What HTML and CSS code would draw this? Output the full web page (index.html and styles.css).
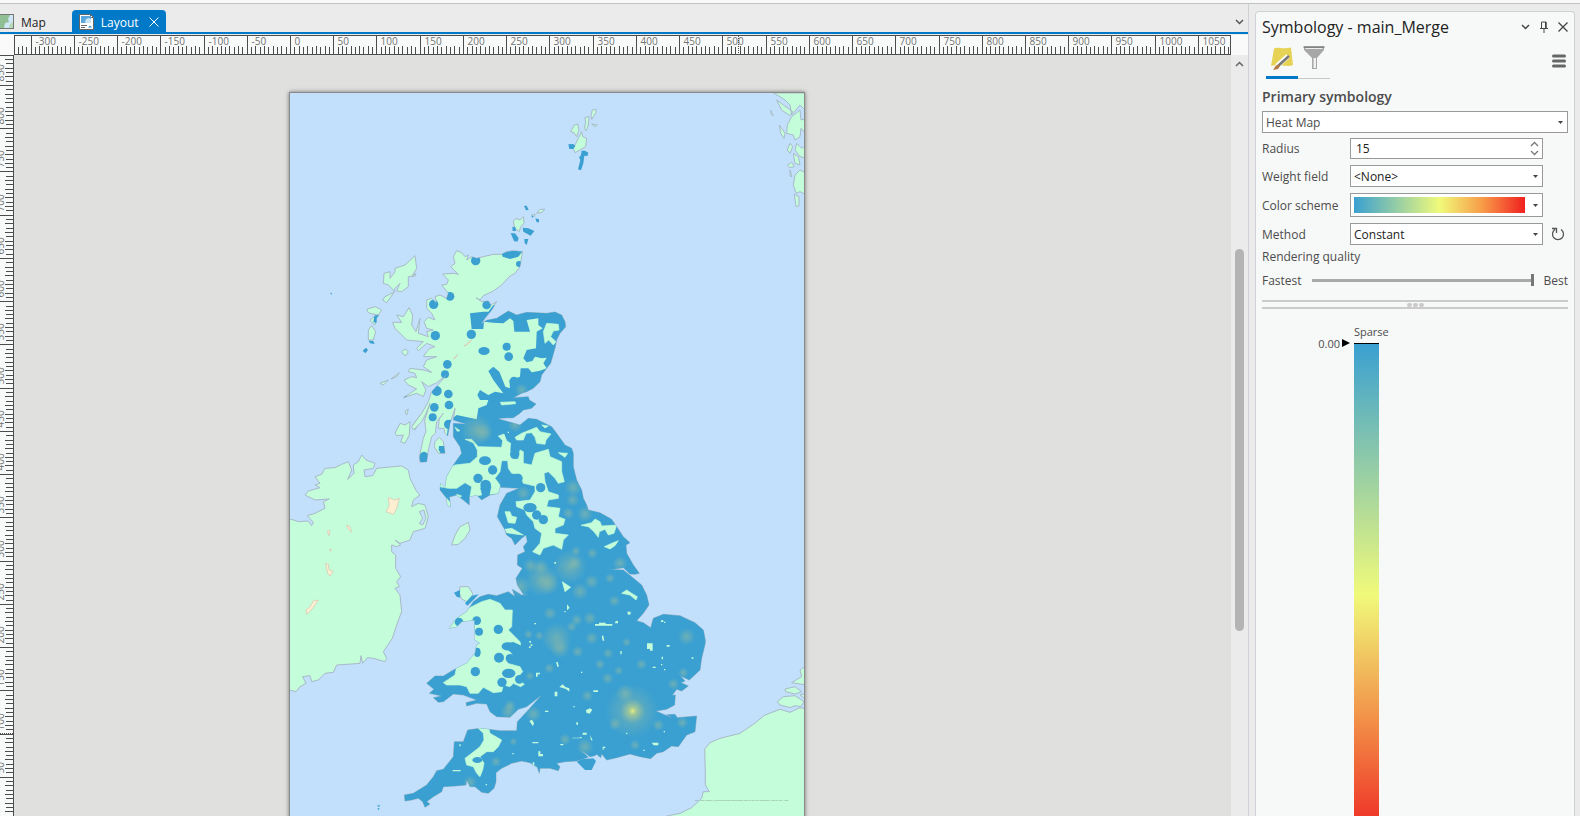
FILE: index.html
```html
<!DOCTYPE html>
<html lang="en">
<head>
    <meta charset="UTF-8">
    <meta name="viewport" content="width=device-width, initial-scale=1.0">
    <title>Layout - Symbology</title>
    <link rel="stylesheet" href="styles.css">
</head>
<body>
    <div class="ribbon-edge"></div>

    <div class="workspace">
        <!-- Layout view -->
        <main class="view">
            <div class="view-tabs">
                <button class="view-tab" type="button">
                    <svg width="16" height="16" viewBox="0 0 16 16">
                        <rect x="0.5" y="0.5" width="14" height="14" fill="#cfe6f5" stroke="#777"/>
                        <path d="M1 1h10l-2 4 1 3-4 1-1 5H1z" fill="#8fbf93"/>
                        <path d="M10 14l1-4 3-2v6z" fill="#b5d9b5"/>
                    </svg>
                    Map
                </button>
                <button class="view-tab active" type="button">
                    <svg width="16" height="16" viewBox="0 0 16 16">
                        <path d="M0.5 0.5h11l3 3v12h-14z" fill="#fff" stroke="#666"/>
                        <path d="M11.500 0.500v3h3z" fill="#fff" stroke="#666"/>
                        <rect x="2" y="2" width="10" height="7" fill="#5ba7dc"/>
                        <path d="M6 8l1-3 3-1 2 1v4H7z" fill="#c9e4f5"/>
                        <path d="M2 11.500h6M2 13.500h4" stroke="#666"/>
                        <path d="M9 13.500l2-2 2 2z" fill="#2d8bd0"/>
                    </svg>
                    Layout
                    <svg class="tab-close" width="10" height="10" viewBox="0 0 10 10"><path d="M0.500 0.500l9 9M9.500 0.500l-9 9" stroke="#fff" fill="none"/></svg>
                </button>
                <button class="icon-button tab-list" type="button" aria-label="Open views">
                    <svg width="9" height="6" viewBox="0 0 9 6"><path d="M1 1l3.500 3.500L8 1" fill="none" stroke="#555" stroke-width="1.500"/></svg>
                </button>
            </div>

            <div class="view-body">
                <div class="corner"></div>
                <svg class="ruler ruler-x" id="ruler-x"></svg>
                <div class="corner"></div>
                <svg class="ruler ruler-y" id="ruler-y"></svg>

                <div class="canvas">
                    <div class="sheet">
                        <svg class="map" viewBox="30 24 1542 2523" role="img" aria-label="Heat map of Great Britain">
                            <defs>
                                <path id="gb" d="M530 497L545 503 555 515 565 510 560 525 575 515 590 520 610 515 640 508 665 508 680 500 700 497 728 500 725 515 720 545 705 565 690 573 665 600 640 618 610 632 600 645 588 638 605 650 625 648 633 660 650 650 635 675 615 700 603 717 620 706 650 700 685 678 710 690 740 682 800 685 825 681 845 690 855 710 857 725 840 745 830 765 825 790 812 835 800 850 785 870 780 890 760 910 740 920 725 925 700 938 745 935 748 945 768 957 755 970 730 975 720 985 700 998 655 1000 640 987 660 1003 720 1020 745 1000 770 1003 815 1025 830 1045 855 1080 875 1090 880 1105 880 1145 890 1185 905 1215 910 1240 920 1260 925 1275 960 1283 995 1303 1010 1325 1030 1355 1050 1373 1038 1380 1040 1405 1060 1440 1078 1465 1065 1468 1050 1467 1030 1448 1000 1453 980 1453 1030 1455 1055 1475 1085 1500 1100 1530 1107 1560 1090 1585 1070 1607 1090 1613 1112 1628 1120 1600 1150 1588 1200 1592 1245 1613 1270 1635 1277 1670 1265 1720 1260 1755 1228 1785 1202 1773 1215 1788 1203 1793 1225 1803 1205 1818 1190 1813 1175 1833 1160 1832 1186 1830 1184 1860 1160 1873 1128 1878 1148 1887 1180 1900 1160 1889 1185 1888 1192 1898 1250 1893 1245 1940 1220 1950 1195 1985 1175 1983 1150 2000 1130 2005 1112 2021 1080 2015 1050 2007 1010 2018 980 2025 965 2007 962 2018 950 2008 945 2012 930 2015 900 1993 925 2017 890 2028 855 2030 830 2035 840 2045 835 2057 810 2050 780 2050 778 2065 772 2047 750 2033 725 2028 695 2035 665 2050 648 2063 648 2090 642 2110 625 2125 605 2122 585 2105 570 2105 560 2085 558 2100 525 2103 490 2105 485 2120 460 2135 440 2150 450 2157 435 2167 428 2150 415 2140 395 2145 375 2148 373 2130 400 2125 440 2100 460 2075 470 2057 490 2053 520 2015 523 1970 550 1970 563 1935 600 1930 660 1937 710 1937 712 1910 745 1875 785 1830 740 1865 715 1873 690 1897 650 1895 630 1880 620 1857 590 1855 560 1863 558 1853 590 1845 550 1830 520 1827 490 1850 475 1852 460 1838 485 1833 448 1825 462 1813 440 1795 465 1773 490 1773 520 1755 560 1735 585 1705 590 1680 600 1675 585 1665 585 1645 583 1605 545 1610 530 1625 508 1630 530 1600 560 1580 580 1550 600 1535 625 1528 650 1532 685 1520 705 1535 697 1513 725 1530 745 1528 730 1528 712 1500 708 1480 727 1450 712 1440 713 1410 735 1400 730 1385 742 1370 738 1350 725 1360 705 1380 695 1360 680 1350 675 1335 652 1295 660 1260 680 1225 717 1210 660 1207 655 1225 630 1230 605 1245 590 1230 568 1235 568 1260 550 1245 530 1230 508 1236 512 1265 502 1260 500 1240 480 1215 482 1195 495 1210 500 1175 520 1140 545 1105 540 1085 520 1055 520 1015 560 1018 520 1005 525 970 510 1015 503 1053 495 1045 492 1030 475 1030 478 1000 490 985 470 1010 466 1045 455 1055 445 1095 440 1130 420 1132 418 1115 430 1060 438 1040 434 1005 450 955 438 985 425 1010 400 1035 395 1025 425 985 445 950 455 920 500 870 470 893 445 905 425 890 438 915 430 935 410 925 370 938 390 925 410 912 385 900 372 885 395 875 410 878 405 865 385 860 390 850 430 855 455 862 430 845 440 825 470 815 430 815 440 800 450 790 465 785 440 775 415 797 410 790 430 770 380 765 345 730 338 712 365 712 350 690 370 695 387 668 398 690 395 720 408 740 420 700 415 745 445 755 440 740 460 735 440 730 432 710 445 697 465 705 455 685 440 670 440 645 455 640 470 655 465 635 480 630 500 640 505 625 485 600 500 598 505 585 488 567 520 565 535 568 512 545 525 535 520 515Z"/>
                                <clipPath id="gb-clip"><use href="#gb"/></clipPath>
                                <radialGradient id="warm">
                                    <stop offset="0" stop-color="#a0c09c" stop-opacity="0.5"/>
                                    <stop offset="1" stop-color="#a0c09c" stop-opacity="0"/>
                                </radialGradient>
                                <radialGradient id="hot">
                                    <stop offset="0" stop-color="#e6ec80"/>
                                    <stop offset="0.300" stop-color="#b9d28a" stop-opacity="0.700"/>
                                    <stop offset="1" stop-color="#9dbf9f" stop-opacity="0"/>
                                </radialGradient>
                            </defs>

                            <rect x="0" y="0" width="1600" height="2600" fill="#c2dffc"/>

                            <!-- Other land -->
                            <g class="land">
                                <path d="M20 1307L35 1303 55 1310 85 1308 95 1322 100 1312 82 1292 105 1285 135 1270 130 1250 148 1242 105 1245 75 1230 85 1218 120 1208 105 1200 120 1195 105 1175 125 1168 135 1150 165 1148 185 1138 205 1130 215 1155 203 1183 222 1165 220 1140 235 1130 245 1110 258 1125 285 1135 280 1150 252 1155 255 1175 278 1172 290 1150 340 1145 365 1143 385 1155 390 1180 410 1220 420 1230 400 1245 395 1265 415 1255 435 1260 445 1295 435 1330 400 1340 390 1365 360 1375 345 1365 362 1380 350 1385 335 1380 335 1400 347 1410 347 1450 362 1475 350 1490 358 1505 345 1510 360 1530 365 1580 350 1620 337 1660 320 1685 310 1700 320 1720 315 1730 280 1720 262 1718 248 1735 243 1712 240 1735 215 1737 170 1740 160 1762 135 1765 115 1785 95 1790 90 1772 68 1775 78 1795 60 1805 48 1820 20 1813Z"/>
                                <path d="M418 1280L432 1275 438 1300 428 1320 418 1315 428 1300Z" fill="#c2dffc"/>
                                <path d="M515 1380L525 1350 540 1325 565 1312 570 1335 555 1360 535 1378Z"/>
                                <path d="M405 512L410 550 395 575 408 565 405 573 385 575 385 605 365 620 350 618 360 595 345 610 340 625 320 653 308 645 315 635 345 620 325 600 310 595 312 565 330 560 330 580 345 560 345 550 375 540Z"/>
                                <path d="M262 672L285 665 305 675 295 690 270 685 262 680ZM270 705L290 690 285 720 275 712ZM265 735L275 722 287 740 280 765 265 765Z"/>
                                <path d="M365 800L375 792 385 800 378 812 370 808ZM300 895L325 885 310 900ZM333 882L358 863 350 875ZM375 980L385 972 380 990Z"/>
                                <path d="M345 1045L360 1015 375 1020 390 1010 388 1050 375 1075 362 1070 370 1050 350 1052ZM398 1020L425 985 435 972 425 1000 405 1035Z"/>
                                <path d="M465 1070L478 1057 490 1070 495 1105 475 1105 463 1085Z"/>
                                <path d="M540 1505L565 1505 578 1525 575 1542 560 1550 545 1542 538 1525Z"/>
                                <path d="M700 410L708 400 720 405 730 395 732 415 722 425 718 440 705 430ZM770 385L780 373 795 373 785 382ZM755 390L765 388 762 396Z"/>
                                <!-- Shetland -->
                                <path d="M937 75L948 73 948 83 940 95 935 103 933 90ZM915 97L927 95 925 120 918 137 913 130 917 115ZM935 117L952 120 945 125ZM872 140L883 120 893 117 897 135 890 155 882 143ZM895 160L905 140 908 155 920 160 917 185 900 195 885 203 880 190Z"/>
                                <!-- Norway -->
                                <path d="M1480 24L1580 24 1580 80 1560 60 1535 90 1530 60 1515 45 1500 35ZM1535 95L1560 75 1563 105 1580 100 1580 150 1563 130 1560 155 1545 165 1540 150 1520 145 1522 120ZM1490 45L1510 60 1538 80 1530 92 1505 75ZM1472 76L1480 92 1474 88ZM1498 120L1515 145 1512 160 1502 145ZM1530 175L1538 185 1530 205 1522 195ZM1580 180L1565 190 1550 175 1545 195 1560 215 1580 220ZM1540 205L1555 215 1560 240 1545 235ZM1522 240L1535 232 1543 245 1530 248ZM1560 255L1580 265 1580 330 1560 320 1548 325 1540 300 1545 270ZM1530 255L1536 275 1530 273ZM1543 328L1557 335 1557 362 1548 365Z"/>
                                <!-- Continent -->
                                <path d="M1580 1740L1560 1755 1565 1775 1535 1793 1580 1800ZM1515 1812L1545 1805 1565 1820 1545 1827 1517 1820ZM1580 1825L1560 1830 1580 1845ZM1492 1850L1510 1835 1545 1832 1572 1850 1562 1865 1545 1862 1530 1868 1500 1860Z"/>
                                <path d="M1580 1872L1560 1868 1530 1882 1500 1873 1455 1890 1420 1918 1380 1945 1320 1960 1290 1973 1274 1992 1276 2060 1276 2100 1288 2120 1270 2120 1265 2140 1235 2168 1200 2185 1160 2193 1130 2250 1580 2250Z"/>
                                <use href="#gb"/>
                            </g>

                            <!-- Lakes -->
                            <g fill="#fdf0d2" stroke="#d9bfae" stroke-width="2">
                                <path d="M325 1238L345 1245 358 1240 350 1270 340 1288 318 1280 328 1262Z"/>
                                <path d="M137 1435L145 1438 147 1455 160 1458 150 1473 143 1465ZM115 1545L100 1548 90 1565 78 1575 80 1588 98 1570ZM200 1320L210 1325 215 1342 205 1332ZM142 1338L150 1337 147 1352ZM148 1393L154 1393 152 1399Z"/>
                                <path d="M552 783L575 765 560 780ZM520 822L533 808 525 820Z"/>
                            </g>

                            <!-- Heat surface -->
                            <g clip-path="url(#gb-clip)">
                                <path class="surface" d="M570 685L610 680 625 680 640 660 700 660 870 660 900 900 1320 1400 1320 2200 340 2200 400 1400 470 1200 515 1130 500 1060 505 1010 530 990 590 1003 595 970 620 960 625 945 600 945 592 930 600 915 625 930 645 920 670 925 655 905 640 885 625 858 640 845 658 860 676 905 690 910 688 885 720 875 722 850 745 850 755 862 780 857 800 850 790 835 800 818 785 820 765 815 757 828 740 832 730 820 740 795 768 790 770 740 788 730 775 720 775 700 740 705 750 740 703 740 700 708 690 700 670 715 640 713 612 710 610 732 575 732Z"/>
                                <g class="spots">
                                    <circle cx="587" cy="527" r="14"/><circle cx="717" cy="537" r="9"/>
                                    <circle cx="510" cy="634" r="13"/><circle cx="461" cy="658" r="14"/>
                                    <circle cx="620" cy="638" r="9"/><circle cx="620" cy="660" r="13"/>
                                    <circle cx="466" cy="752" r="14"/><circle cx="574" cy="748" r="14"/>
                                    <ellipse cx="612" cy="798" rx="17" ry="12"/><circle cx="680" cy="785" r="12"/>
                                    <circle cx="686" cy="815" r="13"/><circle cx="502" cy="838" r="13"/>
                                    <circle cx="495" cy="868" r="12"/><circle cx="470" cy="918" r="15"/>
                                    <circle cx="505" cy="927" r="13"/><circle cx="463" cy="967" r="13"/>
                                    <circle cx="507" cy="960" r="13"/><circle cx="702" cy="888" r="13"/>
                                    <circle cx="458" cy="997" r="12"/><circle cx="506" cy="1018" r="14"/>
                                    <ellipse cx="432" cy="1118" rx="14" ry="18"/><circle cx="374" cy="936" r="6"/>
                                    <path d="M664 503L735 490 715 515 690 522 668 515Z"/>
                                </g>
                                <g class="gaps">
                                    <path d="M800 715L835 718 837 735 820 738 812 755 828 770 820 780 806 765 795 775 790 740ZM661 952L705 950 707 956 665 960Z"/>
                                    <g transform="translate(480 945)">
                                        <path d="M75 118L95 118 115 140 185 142 188 122 175 108 192 102 200 122 212 130 210 150 215 175 235 178 240 150 250 155 250 190 275 195 285 160 325 148 330 170 365 185 365 215 373 245 355 250 345 235 325 215 312 220 315 245 325 275 355 285 355 295 325 300 320 320 360 325 355 350 375 358 370 375 345 385 345 400 385 405 370 420 365 448 340 435 310 445 300 465 278 455 300 430 305 400 285 385 280 365 260 345 255 330 230 320 228 305 270 300 285 275 285 258 250 250 240 222 215 220 205 205 203 182 185 182 180 215 165 235 180 255 178 280 150 283 155 260 130 242 120 265 125 285 90 290 95 260 75 248 50 265 25 265 0 260 0 220 45 195 90 190 112 170 112 150 100 128Z"/>
                                        <path d="M225 112L245 100 275 88 290 82 300 95 333 102 318 120 315 133 290 130 285 112 275 98 258 100 250 120 230 120ZM355 158L383 160 375 172ZM195 335L210 335 215 348 230 352 225 370 205 368ZM195 388L215 385 250 405 225 402 200 398ZM423 376L455 368 465 357 480 365 485 378 530 375 522 400 505 405 495 388 478 395 475 412 462 395 445 380ZM493 440L515 430 535 422 525 437 510 447ZM367 545L392 562 375 575ZM545 580L560 570 575 580 592 590 588 600 570 585ZM305 75L325 78 315 84ZM45 82L60 92 52 94ZM20 295L32 310 30 325 22 315ZM50 283L65 288 57 293Z"/>
                                    </g>
                                    <!-- Wales -->
                                    <path d="M500 1640L500 1590 555 1575 605 1550 630 1543 660 1555 675 1575 697 1575 695 1625 685 1635 720 1670 722 1680 700 1670 670 1675 665 1690 690 1700 700 1715 680 1720 683 1735 720 1745 728 1760 710 1780 733 1798 722 1805 700 1795 690 1805 670 1800 665 1820 640 1823 610 1807 595 1825 570 1825 560 1805 540 1800 500 1800 490 1793 525 1770 530 1745 550 1700 580 1680 575 1620Z"/>
                                    <!-- Devon -->
                                    <path d="M590 1925L625 1925 630 1945 665 1965 655 1985 640 2000 620 2000 600 2015 612 2035 608 2055 600 2075 590 2065 580 2045 560 2040 555 2020 575 2005 600 1985 612 1965 610 1945Z"/>
                                </g>
                                <!-- Small gaps -->
                                <path fill="#c3fdd9" d="M945 1617h12v-4h20v4h20v5h-52zM965 1652l5 0 3 15h-5zM1101 1675h17v22h-8v-5h-9zM1042 1580l10 0 0 8-8 2zM1007 1608h7v7h-9zM861 1558l8 10-8 8zM768 1763h12v5h-7v7h-5zM828 1731h5l4 14h-5zM838 1806l10-8 8 8 12 4v10l-10-8zM824 1820h8v14h-8zM940 1816h14v5h-14zM918 1875l12-5 7 4-8 12-10-3zM748 1908l8-4 6 10-3 10zM877 1958h20l8-3v5h-28zM908 1943h12v6h-12zM930 1950l8 16h-5zM757 1971h18v4h-18zM775 1999h6v8h8v7h-14zM1115 1973h20v8h-14zM968 1985h8v4h-5v5h-3zM841 1977h9v4h-9zM518 2055h24v4h-24zM758 2032h5v12h-5zM1160 1680h9v5h-9zM1118 1745h9v4h-9zM1021 1698h4v10h-4zM795 1877h10v4h-10zM763 1614h5v4h-5zM1143 1606h7v5h-7zM1152 1610h4v4h-4zM1235 1717h5v5h-5zM1145 1715h4v8h-4zM1143 1737h4v4h-4zM1152 1752h4v4h-4zM748 1668h5v5h-5zM752 1678h5v5h-5zM747 1684h5v5h-5zM903 1760h4v4h-4zM889 1912h5v7h-5zM880 1863h4v4h-4zM1038 1943h4v4h-4zM1090 1994h4v4h-4zM697 2004h4v4h-4zM538 1978h4v6h-4zM617 2097h4v4h-4zM823 1431h5v5h-5zM683 1040h4v4h-4zM853 1578h4v4h-4zM1151 1938h4v4h-4z"/>
                                <g class="spots">
                                    <ellipse cx="615" cy="1127" rx="18" ry="13"/><circle cx="638" cy="1155" r="14"/>
                                    <circle cx="594" cy="1180" r="14"/><circle cx="704" cy="1108" r="14"/>
                                    <circle cx="714" cy="1180" r="14"/><circle cx="782" cy="1208" r="14"/>
                                    <ellipse cx="750" cy="1268" rx="20" ry="14"/><circle cx="770" cy="1290" r="14"/>
                                    <circle cx="790" cy="1304" r="14"/><circle cx="617" cy="1200" r="16"/>
                                    <circle cx="655" cy="1633" r="14"/><circle cx="590" cy="1607" r="13"/>
                                    <circle cx="597" cy="1640" r="12"/><ellipse cx="592" cy="1702" rx="10" ry="14"/>
                                    <circle cx="657" cy="1718" r="15"/><circle cx="586" cy="1760" r="14"/>
                                    <ellipse cx="683" cy="1684" rx="18" ry="12"/><circle cx="690" cy="1720" r="13"/>
                                    <ellipse cx="686" cy="1765" rx="20" ry="14"/><circle cx="718" cy="1783" r="13"/>
                                    <circle cx="666" cy="1792" r="14"/><circle cx="537" cy="1611" r="13"/>
                                    <ellipse cx="592" cy="2025" rx="15" ry="9"/>
                                </g>
                                <g fill="url(#warm)">
                                    <circle cx="590" cy="1035" r="48"/><circle cx="610" cy="1042" r="28"/><circle cx="705" cy="1020" r="22"/>
                                    <circle cx="880" cy="1208" r="26"/><circle cx="878" cy="1245" r="20"/><circle cx="915" cy="1287" r="24"/><circle cx="865" cy="1285" r="18"/>
                                    <circle cx="752" cy="1442" r="22"/><circle cx="782" cy="1446" r="24"/><circle cx="884" cy="1434" r="22"/><circle cx="870" cy="1445" r="50"/>
                                    <circle cx="805" cy="1495" r="34"/><circle cx="785" cy="1485" r="50"/><circle cx="720" cy="1505" r="32"/><circle cx="937" cy="1405" r="17"/>
                                    <circle cx="888" cy="1398" r="15"/><circle cx="1020" cy="1435" r="22"/><circle cx="935" cy="1490" r="22"/><circle cx="900" cy="1520" r="26"/>
                                    <circle cx="725" cy="915" r="20"/><circle cx="730" cy="1225" r="22"/><circle cx="990" cy="1480" r="16"/>
                                    <circle cx="1003" cy="1548" r="18"/><circle cx="810" cy="1585" r="20"/><circle cx="930" cy="1600" r="20"/><circle cx="935" cy="1660" r="20"/>
                                    <circle cx="830" cy="1660" r="46"/><circle cx="840" cy="1690" r="30"/><circle cx="893" cy="1700" r="18"/><circle cx="984" cy="1705" r="16"/>
                                    <circle cx="1084" cy="1738" r="17"/><circle cx="1220" cy="1655" r="26"/><circle cx="1210" cy="1763" r="16"/><circle cx="1180" cy="1797" r="18"/>
                                    <circle cx="983" cy="1780" r="18"/><circle cx="960" cy="1738" r="16"/><circle cx="922" cy="1832" r="18"/><circle cx="760" cy="1887" r="24"/>
                                    <circle cx="685" cy="1880" r="24"/><circle cx="690" cy="1862" r="18"/><circle cx="1005" cy="1917" r="20"/><circle cx="1207" cy="1913" r="18"/>
                                    <circle cx="1135" cy="1920" r="18"/><circle cx="855" cy="1963" r="18"/><circle cx="915" cy="1985" r="26"/><circle cx="1035" cy="1825" r="28"/>
                                    <circle cx="648" cy="2030" r="16"/><circle cx="570" cy="2092" r="20"/><circle cx="745" cy="1648" r="14"/><circle cx="778" cy="1652" r="14"/>
                                    <circle cx="808" cy="1750" r="16"/><circle cx="1016" cy="1757" r="14"/><circle cx="875" cy="1625" r="16"/><circle cx="1040" cy="1672" r="14"/>
                                    <circle cx="700" cy="1970" r="12"/><circle cx="890" cy="1605" r="18"/><circle cx="1065" cy="1980" r="16"/><circle cx="750" cy="1773" r="14"/>
                                </g>
                                <circle cx="1056" cy="1879" r="80" fill="url(#warm)"/>
                                <circle cx="1058" cy="1878" r="38" fill="url(#hot)"/>
                            </g>

                            <!-- Heat on the islands -->
                            <g class="spots">
                                <path d="M865 178L880 177 886 183 880 192 868 192ZM905 197L915 197 925 203 922 213 913 212 910 235 903 256 894 253 901 225 897 217 903 210Z"/>
                                <path d="M732 362L740 362 746 375 738 376ZM766 400L777 403 777 412 770 412ZM697 425L706 427 708 438 698 438ZM728 428L745 430 763 438 752 452 730 440ZM692 445L705 445 716 460 712 470 702 468ZM733 462L745 462 740 480 734 474ZM753 392L759 392 759 400Z"/>
                                <path d="M283 692L298 690 290 700 290 713 280 712ZM266 767L280 768 284 777 270 775ZM248 797L258 788 264 795 256 805ZM150 623L156 624 155 629Z"/>
                                <path d="M477 1083L492 1083 495 1104 482 1105 476 1095ZM522 1523L540 1515 540 1538 530 1535ZM555 1555L575 1532 596 1528 580 1545 562 1562ZM290 2162L300 2160 298 2166ZM292 2170L299 2170 296 2176Z"/>
                                <path d="M890 2030L905 2023 940 2020 948 2028 935 2055 915 2055Z"/>
                            </g>
                            <text class="credits" x="1245" y="2147">Esri, HERE, Garmin, (c) OpenStreetMap contributors, and the GIS user community, Source: Esri, HERE</text>
                        </svg>
                    </div>
                </div>

                <div class="scrollbar">
                    <svg width="9" height="6" viewBox="0 0 9 6"><path d="M1 5l3.500-3.500L8 5" fill="none" stroke="#666" stroke-width="1.500"/></svg>
                    <div class="scroll-thumb"></div>
                </div>
            </div>
        </main>

        <!-- Symbology pane -->
        <aside class="pane">
            <header class="pane-header">
                <h1>Symbology - main_Merge</h1>
                <button class="icon-button" type="button" aria-label="Pane menu">
                    <svg width="9" height="6" viewBox="0 0 9 6"><path d="M1 1l3.500 3.500L8 1" fill="none" stroke="#444" stroke-width="1.500"/></svg>
                </button>
                <button class="icon-button" type="button" aria-label="Auto hide">
                    <svg width="8" height="12" viewBox="0 0 8 12"><path d="M1.500 7V1h4.500v6M0 7.500h8M4 7.500V12" fill="none" stroke="#444"/><path d="M5 1h1.500v6H5z" fill="#444"/></svg>
                </button>
                <button class="icon-button" type="button" aria-label="Close">
                    <svg width="10" height="10" viewBox="0 0 10 10"><path d="M0.500 0.500l9 9M9.500 0.500l-9 9" stroke="#444" stroke-width="1.300"/></svg>
                </button>
            </header>

            <div class="pane-tabs">
                <button class="pane-tab active" type="button" aria-label="Primary symbology">
                    <svg width="24" height="24" viewBox="0 0 24 24">
                        <path d="M4 2.500C8 0.500 12 3.500 21 1.500L23 19C17 22 10 17 1 20z" fill="#e6d355"/>
                        <path d="M18 10L7 20" stroke="#fff" stroke-width="5"/>
                        <path d="M19 10L8 20" stroke="#777" stroke-width="2.500"/>
                        <path d="M9 18.500l-3 1-3 4.500 5-1 2-3z" fill="#b5793f"/>
                    </svg>
                </button>
                <button class="pane-tab" type="button" aria-label="Display filters">
                    <svg width="24" height="24" viewBox="0 0 24 24">
                        <path d="M2 1h20v3l-7 8v11H10V12L2 4z" fill="#a7a7a7"/>
                        <path d="M1.500 1h21" stroke="#777" stroke-width="1.500"/>
                        <path d="M3.500 2.500h17" stroke="#eee"/>
                        <path d="M11.500 12h2.500v10h-2.500z" fill="#f0f0f0"/>
                    </svg>
                </button>
                <button class="icon-button options" type="button" aria-label="Options">
                    <svg width="14" height="14" viewBox="0 0 14 14"><path d="M1.500 2h11M1.500 7h11M1.500 12h11" stroke="#666" stroke-width="3" stroke-linecap="round"/></svg>
                </button>
            </div>

            <h2><label for="symbology">Primary symbology</label></h2>
            <select class="field" id="symbology"><option>Heat Map</option></select>

            <div class="form">
                <label for="radius">Radius</label>
                <div class="spinner">
                    <input class="field" id="radius" type="text" value="15">
                    <div class="spin-buttons">
                        <button type="button" aria-label="Increase"><svg width="9" height="6" viewBox="0 0 9 6"><path d="M1 5l3.500-3.500L8 5" fill="none" stroke="#777" stroke-width="1.300"/></svg></button>
                        <button type="button" aria-label="Decrease"><svg width="9" height="6" viewBox="0 0 9 6"><path d="M1 1l3.500 3.500L8 1" fill="none" stroke="#777" stroke-width="1.300"/></svg></button>
                    </div>
                </div>

                <label for="weight">Weight field</label>
                <select class="field" id="weight"><option>&lt;None&gt;</option></select>

                <label for="scheme">Color scheme</label>
                <select class="field scheme" id="scheme"><option></option></select>

                <label for="method">Method</label>
                <select class="field" id="method"><option>Constant</option></select>
                <button class="icon-button" type="button" aria-label="Refresh">
                    <svg width="14" height="14" viewBox="0 0 14 14"><path d="M4 2.500A5.500 5.500 0 1 0 10 2.500M1 1.500h4.500V6" fill="none" stroke="#555" stroke-width="1.300"/></svg>
                </button>
            </div>

            <label class="quality-label" for="quality">Rendering quality</label>
            <div class="quality">
                <span>Fastest</span>
                <input id="quality" type="range" min="0" max="10" value="10">
                <span>Best</span>
            </div>

            <div class="splitter"><i></i><i></i><i></i></div>

            <div class="legend">
                <span class="legend-title">Sparse</span>
                <span class="legend-value">0.00<svg width="8" height="8" viewBox="0 0 8 8"><path d="M0 0l8 4-8 4z"/></svg></span>
                <div class="ramp"></div>
            </div>
        </aside>
    </div>

    <script src="rulers.js"></script>
</body>
</html>
```
FILE: styles.css
```css
* {
    margin: 0;
    padding: 0;
    box-sizing: border-box;
}

body {
    display: flex;
    flex-direction: column;
    height: 100vh;
    overflow: hidden;
    background: #ebebeb;
    color: #4c4c4c;
    font-family: "Open Sans", "Noto Sans", sans-serif;
    font-size: 12px;
}

button {
    border: 0;
    background: none;
    font: inherit;
}

svg {
    display: block;
}

.ribbon-edge {
    flex: none;
    height: 4px;
    background: #f7f9f8;
    border-bottom: 1px solid #c3c3c3;
}

.workspace {
    flex: 1;
    display: flex;
    min-height: 0;
}

/* Layout view */
.view {
    flex: 1;
    display: flex;
    flex-direction: column;
    min-width: 0;
    border-right: 1px solid #d0d1d5;
}

.view-tabs {
    display: flex;
    align-items: flex-end;
    height: 30px;
    border-bottom: 2px solid #007ac8;
}

.view-tab {
    display: flex;
    align-items: center;
    gap: 6px;
    height: 22px;
    padding-right: 26px;
    padding-top: 2px;
    color: #222;
}

.view-tab:first-child {
    margin-left: -1px;
}

.view-tab.active {
    padding: 2px 7px 0;
    border-radius: 4px 4px 0 0;
    background: #007ac8;
    color: #fff;
}

.tab-close {
    margin-left: 4px;
}

.icon-button {
    display: flex;
    align-items: center;
    justify-content: center;
}

.tab-list {
    margin-left: auto;
    width: 18px;
    height: 20px;
}

.view-body {
    flex: 1;
    display: grid;
    grid-template-columns: 14px 1fr 17px;
    grid-template-rows: 20px 1fr;
    min-height: 0;
    padding-top: 1px;
}

.corner {
    background: #fafafa;
}

.ruler {
    width: 100%;
    height: 100%;
    background: #f8faf9;
    overflow: hidden;
}

.ruler-x {
    border: 1px solid #4c4c4c;
}

.ruler-y {
    border-top: 1px solid #4c4c4c;
    border-right: 1px solid #4c4c4c;
}

.ruler line {
    stroke: #4c4c4c;
    shape-rendering: crispEdges;
}

.ruler .marker {
    stroke-dasharray: 1 1;
}

.ruler text {
    fill: #727272;
    font-size: 10px;
}

.canvas {
    overflow: hidden;
    background: #e0e0df;
}

.sheet {
    width: 516px;
    margin: 37px 0 0 275px;
    border: 1px solid #8a8a8a;
    box-shadow: 0 0 4px rgba(0, 0, 0, 0.5);
}

.map {
    width: 100%;
}

.land {
    fill: #c3fdd9;
    stroke: #a9bac9;
    stroke-width: 3;
}

.surface,
.spots {
    fill: #3aa0d1;
}

.gaps {
    fill: #c3fdd9;
    stroke: #c3fdd9;
    stroke-width: 2;
    stroke-linejoin: round;
}

.credits {
    fill: #7b9489;
    font-size: 6px;
}

.scrollbar {
    display: flex;
    flex-direction: column;
    align-items: center;
    padding-top: 6px;
    background: #ebebeb;
}

.scroll-thumb {
    width: 9px;
    height: 382px;
    margin-top: 182px;
    border-radius: 5px;
    background: #b4b4b4;
}

/* Symbology pane */
.pane {
    display: flex;
    flex-direction: column;
    width: 320px;
    margin: 7px 5px 0 6px;
    padding: 0 6px;
    overflow: hidden;
    border: 1px solid #d0d1d5;
    border-bottom: 0;
    border-radius: 4px 4px 0 0;
    background: #f7f9f8;
}

.pane > * {
    flex: none;
}

.pane-header {
    display: flex;
    align-items: center;
    gap: 10px;
    height: 30px;
}

.pane-header h1 {
    flex: 1;
    color: #222;
    font-size: 16px;
    font-weight: 400;
}

.pane-tabs {
    display: flex;
    height: 37px;
    padding-left: 4px;
}

.pane-tab {
    display: flex;
    justify-content: center;
    width: 32px;
    padding-top: 4px;
    border-bottom: 1px solid #c9c9c9;
}

.pane-tab.active {
    border-bottom: 3px solid #007ac8;
}

.options {
    margin: 0 2px 0 auto;
}

.pane h2 {
    padding: 6px 0 2px;
    font-size: 14px;
    font-weight: 600;
    line-height: 24px;
}

.field {
    width: 100%;
    height: 22px;
    padding: 0 3px;
    border: 1px solid #999;
    border-radius: 0;
    background: #fff;
    color: #222;
    font: inherit;
}

select.field {
    appearance: none;
    background-image: url("data:image/svg+xml,%3Csvg xmlns='http://www.w3.org/2000/svg' width='5' height='3'%3E%3Cpath d='M0 0h5L2.5 3z' fill='%23444'/%3E%3C/svg%3E");
    background-repeat: no-repeat;
    background-position: right 4px center;
}

#symbology {
    color: #4c4c4c;
}

.form {
    display: grid;
    grid-template-columns: 88px 193px 1fr;
    grid-template-rows: 21px 22px 24px 22px;
    row-gap: 6px;
    align-items: center;
    margin-top: 5px;
}

.form label {
    grid-column: 1;
}

.form .icon-button {
    padding-left: 4px;
}

.spinner {
    display: grid;
}

.spinner .field {
    grid-area: 1 / 1;
    height: 21px;
    padding-left: 5px;
}

.spin-buttons {
    grid-area: 1 / 1;
    justify-self: end;
    display: flex;
    flex-direction: column;
    justify-content: space-evenly;
    padding-right: 4px;
}

.form .scheme {
    height: 24px;
    background-image: url("data:image/svg+xml,%3Csvg xmlns='http://www.w3.org/2000/svg' width='5' height='3'%3E%3Cpath d='M0 0h5L2.5 3z' fill='%23444'/%3E%3C/svg%3E"), linear-gradient(90deg, #3aa0d1, #f0fa7a 50%, #f89c48 75%, #f02020);
    background-size: 5px 3px, 171px 16px;
    background-position: right 4px center, 3px center;
}

.quality-label {
    padding-top: 3px;
    line-height: 18px;
}

.quality {
    display: flex;
    align-items: center;
    gap: 10px;
    height: 28px;
}

.quality input {
    flex: 1;
    min-width: 0;
    height: 12px;
    appearance: none;
    background: linear-gradient(#a9a9a9, #a9a9a9) center / 100% 3px no-repeat;
}

.quality input::-webkit-slider-thumb {
    appearance: none;
    width: 3px;
    height: 12px;
    background: #777;
}

.splitter {
    display: flex;
    align-items: center;
    justify-content: center;
    gap: 1px;
    height: 9px;
    margin-top: 6px;
    border: solid #cbcbcb;
    border-width: 2px 0;
}

.splitter i {
    width: 5px;
    height: 4px;
    border-radius: 2px;
    background: #cbcbcb;
}

.legend {
    display: grid;
    grid-template-columns: 92px 25px;
    align-items: start;
    margin-top: 12px;
    font-size: 11px;
}

.legend-title {
    grid-column: 2;
    line-height: 22px;
}

.legend-value {
    display: flex;
    align-items: center;
    justify-content: flex-end;
    gap: 2px;
    height: 14px;
    margin-top: -7px;
    padding-right: 4px;
}

.ramp {
    height: 502px;
    border-top: 1px solid #000;
    background: linear-gradient(#3aa0d1, #f0fa7a 50%, #f29048 75%, #ee2020);
}
```
FILE: rulers.js
```js
// Pixels for one millimetre of the sheet at the current zoom
const SCALE = 0.8647;
const NS = 'http://www.w3.org/2000/svg';

function addLine(svg, x1, y1, x2, y2, name) {
    const line = document.createElementNS(NS, 'line');
    line.setAttribute('x1', x1);
    line.setAttribute('y1', y1);
    line.setAttribute('x2', x2);
    line.setAttribute('y2', y2);
    if (name) line.setAttribute('class', name);
    svg.appendChild(line);
}

function addLabel(svg, text, x, y, rotate) {
    const label = document.createElementNS(NS, 'text');
    label.textContent = text;
    label.setAttribute('x', x);
    label.setAttribute('y', y);
    if (rotate) label.setAttribute('transform', `rotate(-90 ${x} ${y})`);
    svg.appendChild(label);
}

function drawHorizontal(origin, marker) {
    const svg = document.getElementById('ruler-x');
    svg.replaceChildren();
    const width = svg.clientWidth;
    for (let mm = Math.ceil(-origin / SCALE / 5) * 5; mm * SCALE + origin < width; mm += 5) {
        const x = Math.round(mm * SCALE + origin) + 0.5;
        if (mm % 50 === 0) {
            addLine(svg, x, 0, x, 20);
            addLabel(svg, mm, x + 4, 9);
        } else {
            addLine(svg, x, mm % 10 === 0 ? 10 : 11, x, 20);
        }
    }
    addLine(svg, marker, 0, marker, 20, 'marker');
}

function drawVertical(origin, marker) {
    const svg = document.getElementById('ruler-y');
    svg.replaceChildren();
    for (let mm = Math.floor(origin / SCALE / 5) * 5; origin - mm * SCALE < svg.clientHeight; mm -= 5) {
        const y = Math.round(origin - mm * SCALE) + 0.5;
        if (mm % 50 === 0) {
            addLine(svg, 0, y, 14, y);
            addLabel(svg, mm, 4, y - 4, true);
        } else {
            addLine(svg, mm % 10 === 0 ? 5 : 6, y, 14, y);
        }
    }
    addLine(svg, 0, marker, 14, marker, 'marker');
}

function drawRulers() {
    drawHorizontal(275, 723.5);
    drawVertical(764, 677.5);
}

window.addEventListener('resize', drawRulers);
drawRulers();
```
